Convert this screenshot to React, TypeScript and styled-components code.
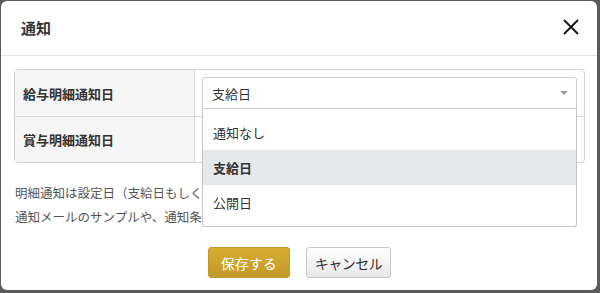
import React from "react";
import styled, { createGlobalStyle } from "styled-components";

const Global = createGlobalStyle`
  html, body { margin: 0; padding: 0; background: #5b5b5b; }
  body { font-family: "Noto Sans CJK JP", "Noto Sans", sans-serif; }
  * { box-sizing: border-box; }
`;

const Backdrop = styled.div`
  width: 600px;
  height: 293px;
  padding: 1px 3px 3px 1px;
  background: #5b5b5b;
`;

const Modal = styled.div`
  width: 596px;
  height: 289px;
  background: #fff;
  border-radius: 6px;
  display: flex;
  flex-direction: column;
`;

const Header = styled.div`
  height: 55px;
  border-bottom: 1px solid #e5e5e5;
  display: flex;
  align-items: center;
  justify-content: space-between;
  padding: 0 18px 2px 20px;
`;

const Title = styled.h4`
  margin: 0;
  font-size: 15px;
  font-weight: 700;
  color: #333;
`;

const Close = styled.button`
  border: 0;
  background: none;
  padding: 0;
  width: 16px;
  height: 16px;
  display: flex;
  cursor: pointer;
`;

const Body = styled.div`
  padding: 13px 12px 0 13px;
`;

const Table = styled.div`
  border: 1px solid #d2d2d2;
  border-radius: 4px;
  position: relative;
`;

const Row = styled.div<{ $first?: boolean }>`
  display: grid;
  grid-template-columns: 180px 1fr;
  height: 46px;
  border-top: ${(p) => (p.$first ? "none" : "1px solid #d8d8d8")};
`;

const Label = styled.div`
  background: #f5f5f5;
  border-right: 1px solid #d8d8d8;
  display: flex;
  align-items: center;
  padding-left: 8px;
  font-size: 13px;
  font-weight: 700;
  color: #333;
`;

const Cell = styled.div`
  padding: 7px 7px 0 7px;
  position: relative;
`;

const Select = styled.div`
  height: 32px;
  border: 1px solid #cfcfcf;
  border-radius: 3px 3px 0 0;
  display: flex;
  align-items: center;
  justify-content: space-between;
  padding: 0 8px 0 9px;
  font-size: 13px;
  color: #333;
  background: #fff;
`;

const Arrow = styled.span`
  width: 0;
  height: 0;
  border-left: 4px solid transparent;
  border-right: 4px solid transparent;
  border-top: 4px solid #999;
`;

const Menu = styled.ul`
  position: absolute;
  left: 7px;
  right: 7px;
  top: 39px;
  margin: 0;
  padding: 6px 0 6px 0;
  list-style: none;
  background: #fff;
  border: 1px solid #c4c4c4;
  border-top: none;
  border-radius: 0 0 3px 3px;
  z-index: 2;
`;

const Item = styled.li<{ $active?: boolean }>`
  height: 35px;
  display: flex;
  align-items: center;
  padding-left: 10px;
  font-size: 13px;
  color: #333;
  font-weight: ${(p) => (p.$active ? 700 : 400)};
  background: ${(p) => (p.$active ? "#e6e9ec" : "transparent")};
`;

const Note = styled.p`
  margin: 18px 0 0 1px;
  font-size: 12.5px;
  line-height: 24px;
  color: #555;
`;

const Footer = styled.div`
  display: flex;
  justify-content: center;
  gap: 16px;
  padding-top: 18px;
`;

const Button = styled.button<{ $primary?: boolean }>`
  height: 31px;
  padding: 0 ${(p) => (p.$primary ? "12px" : "8px")};
  border-radius: 3px;
  font-family: inherit;
  font-size: 14px;
  letter-spacing: ${(p) => (p.$primary ? "0" : "-0.5px")};
  border: 1px solid ${(p) => (p.$primary ? "#c39a26" : "#c8c8c8")};
  color: ${(p) => (p.$primary ? "#fff" : "#333")};
  background: ${(p) =>
    p.$primary
      ? "linear-gradient(#d8ac32, #c2982a)"
      : "linear-gradient(#ffffff, #e8e8e8)"};
  cursor: pointer;
`;

export default function App() {
  return (
    <>
      <Global />
      <Backdrop>
        <Modal>
          <Header>
            <Title>通知</Title>
            <Close aria-label="閉じる">
              <svg width="16" height="16" viewBox="0 0 16 16">
                <path d="M1 1L15 15M15 1L1 15" stroke="#111" strokeWidth="1.8" />
              </svg>
            </Close>
          </Header>
          <Body>
            <Table>
              <Row $first>
                <Label>給与明細通知日</Label>
                <Cell>
                  <Select>
                    <span>支給日</span>
                    <Arrow />
                  </Select>
                  <Menu>
                    <Item>通知なし</Item>
                    <Item $active>支給日</Item>
                    <Item>公開日</Item>
                  </Menu>
                </Cell>
              </Row>
              <Row>
                <Label>賞与明細通知日</Label>
                <Cell />
              </Row>
            </Table>
            <Note>
              明細通知は設定日（支給日もしくは公開日）に送信されます。
              <br />
              通知メールのサンプルや、通知条件はヘルプをご覧ください。
            </Note>
            <Footer>
              <Button $primary>保存する</Button>
              <Button>キャンセル</Button>
            </Footer>
          </Body>
        </Modal>
      </Backdrop>
    </>
  );
}
